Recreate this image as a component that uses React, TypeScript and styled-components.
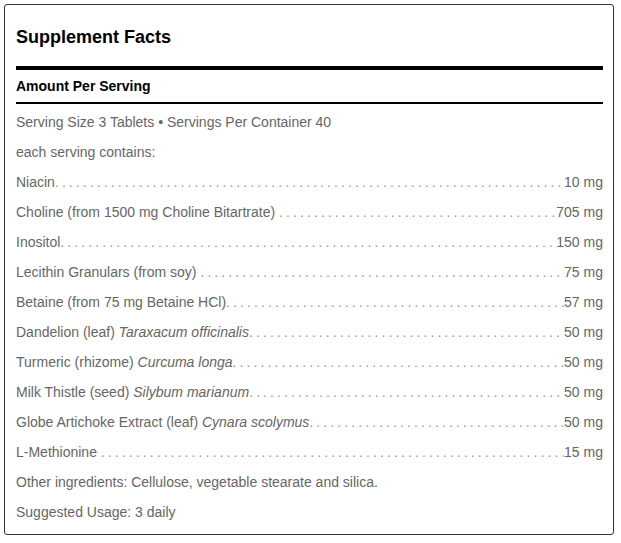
import React from "react";
import styled, { createGlobalStyle } from "styled-components";

const GlobalStyle = createGlobalStyle`
  body {
    margin: 0;
    background: #ffffff;
    font-family: "Liberation Sans", Arial, sans-serif;
  }
`

const FactsBox = styled.div`
  box-sizing: border-box;
  width: 610px;
  margin: 4px 0 0 4px;
  padding: 21px 10px 7px 11px;
  border: 1px solid #333333;
  border-radius: 3px;
`

const Title = styled.h1`
  margin: 0;
  font-size: 18px;
  line-height: 22px;
  font-weight: bold;
  color: #000000;
`

const Rule = styled.div<{ thick?: boolean }>`
  height: ${({ thick }) => (thick ? "4px" : "2px")};
  background: #000000;
  margin-top: ${({ thick }) => (thick ? "18px" : "6px")};
`

const SubTitle = styled.div`
  margin-top: 6px;
  font-size: 14px;
  line-height: 20px;
  font-weight: bold;
  color: #000000;
`

const List = styled.div`
  margin-top: 3px;
  display: flex;
  flex-direction: column;
`

const Line = styled.div`
  height: 30px;
  display: flex;
  align-items: center;
  font-size: 14px;
  color: #666666;
  white-space: nowrap;
`

const Row = styled(Line)`
  align-items: baseline;
  line-height: 30px;
`

const Label = styled.span`
  flex: 1 1 auto;
  min-width: 0;
  overflow: hidden;

  &::after {
    content: ". . . . . . . . . . . . . . . . . . . . . . . . . . . . . . . . . . . . . . . . . . . . . . . . . . . . . . . . . . . . . . . . . . . . . . . . . . . . . . . . . . . . . . . . . . . . . . . . . . . .";
    font-style: normal;
    letter-spacing: -0.4px;
    color: #9a9a9a;
  }
`

const Latin = styled.em`
  font-style: italic;
`

const Amount = styled.span`
  flex: 0 0 auto;
`

type Item = { name: string; latin?: string; amount: string }

const items: Item[] = [
  { name: "Niacin", amount: "10 mg" },
  { name: "Choline (from 1500 mg Choline Bitartrate) ", amount: "705 mg" },
  { name: "Inositol", amount: "150 mg" },
  { name: "Lecithin Granulars (from soy) ", amount: "75 mg" },
  { name: "Betaine (from 75 mg Betaine HCl)", amount: "57 mg" },
  { name: "Dandelion (leaf) ", latin: "Taraxacum officinalis", amount: "50 mg" },
  { name: "Turmeric (rhizome) ", latin: "Curcuma longa", amount: "50 mg" },
  { name: "Milk Thistle (seed) ", latin: "Silybum marianum", amount: "50 mg" },
  { name: "Globe Artichoke Extract (leaf) ", latin: "Cynara scolymus", amount: "50 mg" },
  { name: "L-Methionine ", amount: "15 mg" },
]

export default function App() {
  return (
    <>
      <GlobalStyle />
      <FactsBox>
        <Title>Supplement Facts</Title>
        <Rule thick />
        <SubTitle>Amount Per Serving</SubTitle>
        <Rule />
        <List>
          <Line>Serving Size 3 Tablets • Servings Per Container 40</Line>
          <Line>each serving contains:</Line>
          {items.map((item) => (
            <Row key={item.name}>
              <Label>
                {item.name}
                {item.latin && <Latin>{item.latin}</Latin>}
              </Label>
              <Amount>{item.amount}</Amount>
            </Row>
          ))}
          <Line>Other ingredients: Cellulose, vegetable stearate and silica.</Line>
          <Line>Suggested Usage: 3 daily</Line>
        </List>
      </FactsBox>
    </>
  )
}
